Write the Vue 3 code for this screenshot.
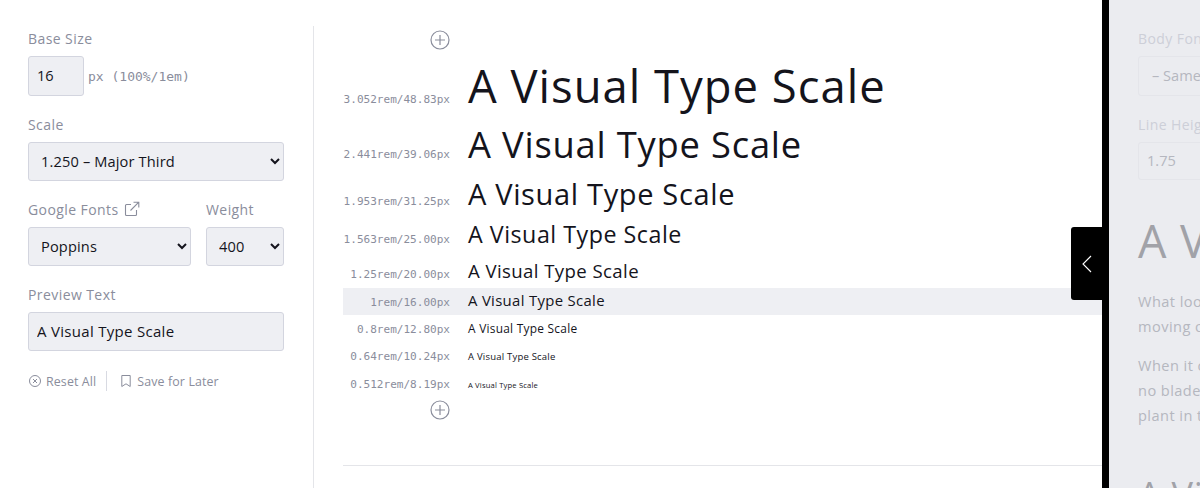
<script setup>
// Poppins is not installed: Open Sans at 93% has about the same cap height and width
const fontScale = 0.93

const rows = [
  { label: '3.052rem/48.83px', size: 48.83, height: 65, pad: 2.5 },
  { label: '2.441rem/39.06px', size: 39.06, height: 55.5, pad: 2.5 },
  { label: '1.953rem/31.25px', size: 31.25, height: 43, pad: 2.5 },
  { label: '1.563rem/25.00px', size: 25, height: 40, pad: 2.5 },
  { label: '1.25rem/20.00px', size: 20, height: 31.8, pad: 2.5 },
  { label: '1rem/16.00px', size: 16, height: 27, pad: 2.5, active: true },
  { label: '0.8rem/12.80px', size: 12.8, height: 27, pad: 5.5 },
  { label: '0.64rem/10.24px', size: 10.24, height: 27, pad: 8 },
  { label: '0.512rem/8.19px', size: 8.19, height: 27, pad: 8.5 }
]
</script>

<template>
  <div class="page">
    <aside class="sidebar">
      <div class="group">
        <label class="label">Base Size</label>
        <div class="base-row">
          <input class="field base-input" value="16" />
          <span class="base-note">px (100%/1em)</span>
        </div>
      </div>
      <div class="group">
        <label class="label">Scale</label>
        <select class="field select">
          <option>1.250 – Major Third</option>
        </select>
      </div>
      <div class="group font-row">
        <div class="font-col">
          <label class="label">
            Google Fonts
            <svg class="ext-icon" viewBox="0 0 16 16" fill="none" stroke="currentColor" stroke-width="1.1">
              <path d="M12.5 9v4.5a1 1 0 0 1-1 1h-9a1 1 0 0 1-1-1v-9a1 1 0 0 1 1-1H7" />
              <path d="M9.5 1.2h5.3v5.3M14.8 1.2 6.5 9.5" />
            </svg>
          </label>
          <select class="field select">
            <option>Poppins</option>
          </select>
        </div>
        <div class="weight-col">
          <label class="label">Weight</label>
          <select class="field select">
            <option>400</option>
          </select>
        </div>
      </div>
      <div class="group">
        <label class="label">Preview Text</label>
        <input class="field text-input" value="A Visual Type Scale" />
      </div>
      <div class="actions">
        <span class="action reset">
          <svg class="action-icon" viewBox="0 0 14 14" fill="none" stroke="currentColor" stroke-width="1">
            <circle cx="7" cy="7" r="5.5" />
            <path d="M5 5l4 4M9 5l-4 4" />
          </svg>
          Reset All
        </span>
        <span class="action save">
          <svg class="action-icon" viewBox="0 0 14 14" fill="none" stroke="currentColor" stroke-width="1">
            <path d="M2.8 1.5h8.4v11L7 9.8l-4.2 2.7z" />
          </svg>
          Save for Later
        </span>
      </div>
    </aside>

    <main class="main">
      <div class="add-row">
        <svg class="add-icon" viewBox="0 0 20 20" fill="none" stroke="currentColor" stroke-width="1.2">
          <circle cx="10" cy="10" r="9" />
          <path d="M10 5v10M5 10h10" />
        </svg>
      </div>
      <div
        v-for="row in rows"
        :key="row.label"
        class="row"
        :class="{ active: row.active }"
        :style="{ height: row.height + 'px', paddingTop: row.pad + 'px' }"
      >
        <span class="row-label">{{ row.label }}</span>
        <span class="row-text" :style="{ fontSize: row.size * fontScale + 'px' }">A Visual Type Scale</span>
      </div>
      <div class="add-row bottom">
        <svg class="add-icon" viewBox="0 0 20 20" fill="none" stroke="currentColor" stroke-width="1.2">
          <circle cx="10" cy="10" r="9" />
          <path d="M10 5v10M5 10h10" />
        </svg>
      </div>
      <hr class="divider" />
      <button class="tab">
        <svg viewBox="0 0 12 20" width="12" height="20" fill="none" stroke="#fff" stroke-width="1.1">
          <path d="M10 2 2 10l8 8" />
        </svg>
      </button>
    </main>

    <section class="drawer">
      <div class="drawer-label">Body Font</div>
      <div class="drawer-field first">– Same as Heading</div>
      <div class="drawer-label">Line Height</div>
      <div class="drawer-field second">1.75</div>
      <h1 class="drawer-title">A Visual</h1>
      <p class="drawer-copy">What looks<br />moving on</p>
      <p class="drawer-copy next">When it comes<br />no blades<br />plant in the</p>
      <h2 class="drawer-sub">A Visual</h2>
    </section>
  </div>
</template>

<style>
body {
  overflow: hidden;
  background: #fff;
}
</style>

<style scoped>
.page {
  display: flex;
  width: 1200px;
  height: 488px;
  overflow: hidden;
  font-family: "Open Sans", "Noto Sans", sans-serif;
  color: #14141c;
}

.sidebar {
  box-sizing: border-box;
  width: 314px;
  flex: none;
  margin-top: 26px;
  padding: 2px 29px 0 28px;
  border-right: 1px solid #e4e5e9;
}

.group {
  margin-bottom: 18px;
}

.label {
  box-sizing: border-box;
  display: flex;
  align-items: center;
  height: 22px;
  margin-bottom: 6px;
  padding-bottom: 2px;
  font-size: 14px;
  letter-spacing: 0.03em;
  color: #8a8d9c;
}

.field {
  box-sizing: border-box;
  display: block;
  height: 39px;
  border: 1px solid #d3d5df;
  border-radius: 3px;
  background-color: #eeeff3;
  color: #14141c;
  font-family: "Open Sans", "Noto Sans", sans-serif;
  font-size: 14.6px;
  outline: none;
}

.base-row {
  display: flex;
  align-items: center;
  gap: 4px;
}

.base-input {
  width: 56px;
  height: 40px;
  padding: 0 8px 2px;
}

.base-note {
  font-family: "DejaVu Sans Mono", monospace;
  font-size: 13px;
  color: #8a8d9c;
}

.select {
  width: 100%;
  padding: 0 8px 2px;
  letter-spacing: 0.01em;
}

.font-row {
  display: flex;
  gap: 15px;
}

.font-col {
  width: 163px;
}

.weight-col {
  width: 78px;
}

.ext-icon {
  width: 16px;
  height: 16px;
  margin-left: 5px;
}

.text-input {
  width: 100%;
  padding: 0 8px 2px;
  font-size: 15px;
  letter-spacing: 0.02em;
}

.actions {
  display: flex;
  align-items: center;
  height: 20px;
  padding-top: 2px;
  font-size: 12.4px;
  letter-spacing: 0.01em;
  color: #8a8d9c;
}

.action {
  display: flex;
  align-items: center;
  gap: 4px;
}

.reset {
  padding-right: 10px;
  border-right: 1px solid #d8dae2;
  height: 20px;
}

.save {
  padding-left: 12px;
}

.action-icon {
  width: 14px;
  height: 14px;
}

.main {
  position: relative;
  box-sizing: border-box;
  width: 788px;
  flex: none;
  padding-left: 29px;
}

.add-row {
  display: flex;
  height: 20px;
  margin-top: 30px;
  margin-bottom: 3px;
  padding-left: 87px;
}

.add-row.bottom {
  margin-top: 4px;
  margin-bottom: 45px;
}

.add-icon {
  width: 20px;
  height: 20px;
  color: #8a8d9c;
}

.row {
  box-sizing: border-box;
  display: flex;
  align-items: baseline;
  gap: 18px;
  white-space: nowrap;
}

.row.active {
  background: #eeeff3;
}

.row-label {
  width: 107px;
  flex: none;
  text-align: right;
  font-family: "DejaVu Sans Mono", monospace;
  font-size: 11.05px;
  color: #8a8d9c;
}

.row-text {
  line-height: 1.3;
  letter-spacing: 0.022em;
  color: #14141c;
}

.divider {
  height: 1px;
  margin: 0;
  border: 0;
  background: #e4e5e9;
}

.tab {
  position: absolute;
  top: 227px;
  right: 0;
  display: flex;
  align-items: center;
  justify-content: center;
  width: 31px;
  height: 73px;
  padding: 0;
  border: 0;
  border-radius: 3px 0 0 3px;
  background: #000;
}

.drawer {
  box-sizing: border-box;
  width: 98px;
  flex: none;
  padding: 28px 0 0 29px;
  border-left: 7px solid #000;
  background: #ebecf0;
  white-space: nowrap;
  color: #b5b7bf;
}

.drawer-label {
  box-sizing: border-box;
  width: 200px;
  height: 22px;
  margin-bottom: 6px;
  font-size: 14px;
  line-height: 22px;
  letter-spacing: 0.03em;
  color: #cdcfd8;
}

.drawer-field {
  box-sizing: border-box;
  width: 200px;
  display: flex;
  align-items: center;
  border: 1px solid #e4e5ea;
  border-radius: 3px;
  font-size: 14.6px;
}

.drawer-field.first {
  height: 40px;
  padding: 0 0 2px 13px;
  margin-bottom: 18px;
}

.drawer-field.second {
  height: 38px;
  padding: 0 0 2px 8px;
}

.drawer-title {
  margin: 28px 0 0;
  font-size: 45px;
  font-weight: 400;
  line-height: 66px;
  letter-spacing: 0.02em;
  color: #a1a2a8;
}

.drawer-copy {
  margin: 15px 0 0;
  font-size: 14.6px;
  line-height: 25px;
  letter-spacing: 0.03em;
}

.drawer-copy.next {
  margin-top: 14px;
}

.drawer-sub {
  margin: 42px 0 0;
  font-size: 36px;
  font-weight: 400;
  letter-spacing: 0.02em;
  color: #a1a2a8;
}
</style>
